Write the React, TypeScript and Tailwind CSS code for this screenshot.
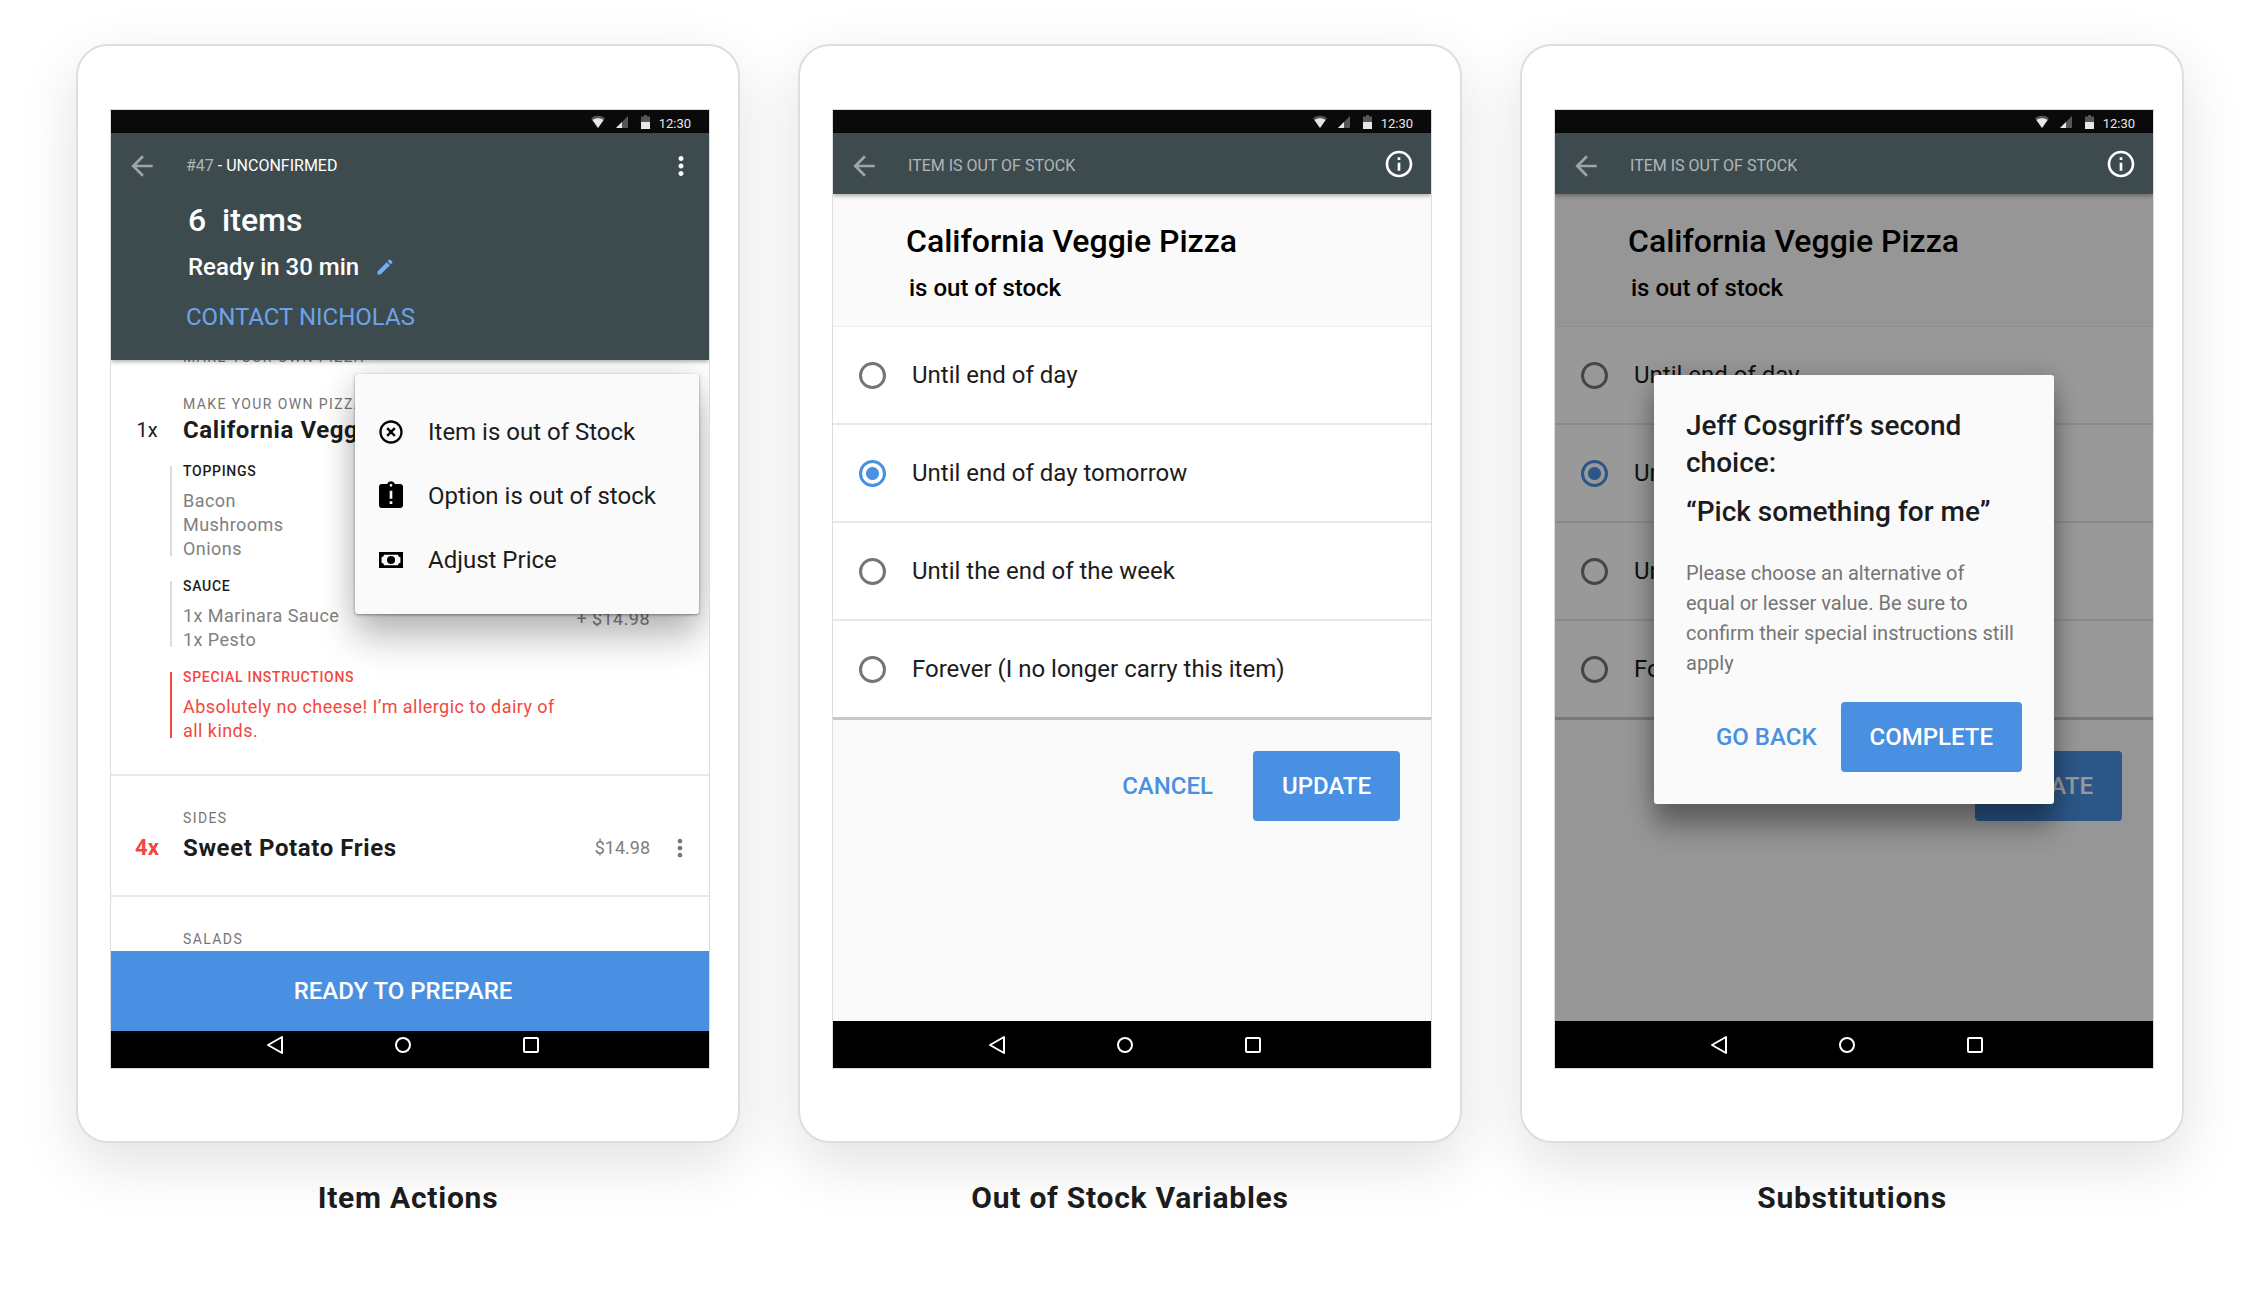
import type { ReactNode } from 'react';
import {
  MdArrowBack,
  MdAssignmentLate,
  MdEdit,
  MdHighlightOff,
  MdInfoOutline,
  MdMoreVert
} from 'react-icons/md';

interface OptionGroupProps {
  title: string;
  alert?: boolean;
  children: ReactNode;
}

interface OrderItemProps {
  quantity: string;
  category: string;
  name: string;
  price?: string;
  highlight?: boolean;
  children?: ReactNode;
}

const stockOptions = [
  'Until end of day',
  'Until end of day tomorrow',
  'Until the end of the week',
  'Forever (I no longer carry this item)'
];

function BanknoteIcon() {
  return (
    <svg viewBox="0 0 24 16" className="w-6 h-4" aria-hidden="true">
      <path
        fillRule="evenodd"
        d="M0 0h24v16H0zM5 2.7a2.6 2.6 0 0 1-2.4 2.6v5.4A2.6 2.6 0 0 1 5 13.3h14a2.6 2.6 0 0 1 2.4-2.6V5.3A2.6 2.6 0 0 1 19 2.7z"
      />
      <circle cx="12" cy="8" r="4" />
    </svg>
  );
}

function StatusBar() {
  return (
    <div className="h-[23px] shrink-0 bg-[#0a0a0a] flex items-center justify-end pr-[18px] text-[#e6e6e6]">
      <svg viewBox="0 0 14 13" className="w-[14px] h-[13px] mr-[11px]" fill="currentColor" aria-hidden="true">
        <path d="M7 13 0 3.2C2 1.500 4.400.7 7 .7s5 .8 7 2.500z" opacity=".35" />
        <path d="M7 13 1.400 5.100C3 3.900 5 3.300 7 3.300s4 .6 5.600 1.800z" />
      </svg>
      <svg viewBox="0 0 12 12" className="w-3 h-3 mr-[13px]" fill="currentColor" aria-hidden="true">
        <path d="M12 0v12H0z" opacity=".35" />
        <path d="M6 6v6H0z" />
      </svg>
      <svg viewBox="0 0 9 14" className="w-[9px] h-[14px] mr-[9px]" fill="currentColor" aria-hidden="true">
        <path d="M3 0h3v1.500h3V7H0V1.500h3z" opacity=".35" />
        <path d="M0 7h9v7H0z" />
      </svg>
      <span className="text-[13px] leading-4 pt-1">12:30</span>
    </div>
  );
}

function NavBar() {
  return (
    <nav className="h-[47px] shrink-0 bg-black flex items-center justify-center gap-[104px] pr-[14px]">
      <button type="button" aria-label="Back">
        <svg viewBox="0 0 24 24" className="size-6" fill="none" stroke="white" strokeWidth="2" strokeLinejoin="round">
          <path d="M19 4v16L5 12z" />
        </svg>
      </button>
      <button type="button" aria-label="Home">
        <svg viewBox="0 0 24 24" className="size-6" fill="none" stroke="white" strokeWidth="2">
          <circle cx="12" cy="12" r="7" />
        </svg>
      </button>
      <button type="button" aria-label="Recent apps">
        <svg viewBox="0 0 24 24" className="size-6" fill="none" stroke="white" strokeWidth="2">
          <rect x="5" y="5" width="14" height="14" rx="1" />
        </svg>
      </button>
    </nav>
  );
}

function AppBar({ title, action }: { title: ReactNode; action: ReactNode }) {
  return (
    <div className="h-[61px] pt-1 pl-[15px] pr-[13px] flex items-center">
      <button type="button" aria-label="Go back" className="mr-7 text-white/50">
        <MdArrowBack className="size-8" />
      </button>
      <span className="text-base leading-6 text-white/60">{title}</span>
      <div className="ml-auto flex">{action}</div>
    </div>
  );
}

function Device({ caption, children }: { caption: string; children: ReactNode }) {
  return (
    <figure>
      <div className="bg-white border-2 border-[#dedede] rounded-[32px] pt-[63px] pb-18 pl-8 pr-7 shadow-[0_20px_60px_rgba(0,0,0,0.12)]">
        <div className="relative aspect-[5/8] border border-[#dcdcdc] flex flex-col overflow-hidden">
          <StatusBar />
          {children}
          <NavBar />
        </div>
      </div>
      <figcaption className="mt-[35px] text-center text-[30px] leading-10 font-bold tracking-wide text-[#1c1c1c]">
        {caption}
      </figcaption>
    </figure>
  );
}

function OptionGroup({ title, alert, children }: OptionGroupProps) {
  return (
    <section className={`-ml-[13px] pl-[11px] border-l-2 ${alert ? 'border-[#f0483e]' : 'border-[#dcdcdc]'}`}>
      <h3
        className={`text-sm leading-[10px] font-medium tracking-wider ${alert ? 'text-[#f0483e]' : 'text-[#1c1c1c]'}`}
      >
        {title}
      </h3>
      <div className={`mt-[13px] -mb-[5px] text-lg leading-6 tracking-wide ${alert ? 'text-[#f0483e]' : 'text-[#808080]'}`}>
        {children}
      </div>
    </section>
  );
}

function OrderItem({ quantity, category, name, price, highlight, children }: OrderItemProps) {
  return (
    <article className="pt-8 border-b-2 border-[#e8e8e8]">
      <p className="pl-[72px] text-sm leading-5 tracking-widest text-[#757575]">{category}</p>
      <div className="flex items-center pr-[9px]">
        <span className={`w-[72px] text-center leading-8 ${highlight ? 'text-[22px] font-bold text-[#f0483e]' : 'text-xl text-[#1c1c1c]'}`}>
          {quantity}
        </span>
        <h2 className="text-2xl leading-8 font-bold tracking-wide text-[#1c1c1c]">{name}</h2>
        {price && (
          <>
            <span className="ml-auto mr-[10px] text-lg leading-6 text-[#808080]">{price}</span>
            <button type="button" aria-label={`${name} actions`} className="size-10 flex items-center justify-center text-[#757575]">
              <MdMoreVert className="size-7" />
            </button>
          </>
        )}
      </div>
      {children}
    </article>
  );
}

function ActionMenu() {
  const actions = [
    { label: 'Item is out of Stock', icon: <MdHighlightOff className="size-7" /> },
    { label: 'Option is out of stock', icon: <MdAssignmentLate className="size-8" /> },
    { label: 'Adjust Price', icon: <BanknoteIcon /> }
  ];

  return (
    <div
      role="menu"
      className="absolute top-[264px] right-[10px] w-[344px] h-[240px] pt-[26px] rounded-[3px] bg-[#fafafa] shadow-[0_24px_36px_rgba(0,0,0,0.25),0_0_30px_rgba(0,0,0,0.12),0_1px_3px_rgba(0,0,0,0.4)]"
    >
      {actions.map((action) => (
        <button
          key={action.label}
          type="button"
          role="menuitem"
          className="w-full h-16 pl-5 flex items-center gap-[21px] text-2xl text-[#1c1c1c]"
        >
          <span className="w-8 flex justify-center text-black">{action.icon}</span>
          {action.label}
        </button>
      ))}
    </div>
  );
}

function OrderScreen() {
  return (
    <>
      <header className="relative z-10 shrink-0 bg-[#3d4b4f] text-white shadow-[0_2px_4px_rgba(0,0,0,0.3)]">
        <AppBar
          title={<>#47 <span className="text-white">- UNCONFIRMED</span></>}
          action={
            <button type="button" aria-label="Order actions" className="text-white">
              <MdMoreVert className="size-[30px]" />
            </button>
          }
        />
        <div className="pt-[6px] pb-[27px] pl-[75px]">
          <div className="pl-0.5">
            <h1 className="text-[32px] leading-10 font-medium whitespace-pre">6  items</h1>
            <div className="mt-[11px] flex items-center gap-4">
              <p className="text-2xl leading-8 font-medium">Ready in 30 min</p>
              <button type="button" aria-label="Edit ready time" className="text-[#74aef6]">
                <MdEdit className="size-5" />
              </button>
            </div>
          </div>
          <div className="mt-[18px] text-2xl leading-8 text-[#6ba4ea]">
            <a href="#contact">CONTACT NICHOLAS</a>
          </div>
        </div>
      </header>

      <main className="flex-1 min-h-0 overflow-hidden bg-white">
        {/* sliver of the row scrolled under the header */}
        <div className="h-[2px] pl-[72px] flex items-end overflow-hidden text-sm leading-[10px] tracking-widest text-[#757575]">
          MAKE YOUR OWN PIZZA
        </div>
        <OrderItem quantity="1x" category="MAKE YOUR OWN PIZZA" name="California Veggie Pizza">
          <div className="mt-5 pb-9 pl-[72px] pr-[59px] flex flex-col gap-[25px]">
            <OptionGroup title="TOPPINGS">
              <ul>
                <li>Bacon</li>
                <li>Mushrooms</li>
                <li>Onions</li>
              </ul>
            </OptionGroup>
            <OptionGroup title="SAUCE">
              <ul>
                <li className="h-6 flex justify-between">
                  1x Marinara Sauce <span className="pt-[3px]">+ $14.98</span>
                </li>
                <li>1x Pesto</li>
              </ul>
            </OptionGroup>
            <OptionGroup title="SPECIAL INSTRUCTIONS" alert>
              <p className="max-w-[390px]">Absolutely no cheese! I’m allergic to dairy of all kinds.</p>
            </OptionGroup>
          </div>
        </OrderItem>
        <OrderItem quantity="4x" category="SIDES" name="Sweet Potato Fries" price="$14.98" highlight>
          <div className="h-[27px]" />
        </OrderItem>
        <p className="pt-8 pl-[72px] text-sm leading-5 tracking-widest text-[#757575]">SALADS</p>
      </main>

      <button type="button" className="relative -mb-[10px] h-20 shrink-0 pr-[14px] bg-[#4990e2] text-white text-2xl font-medium">
        READY TO PREPARE
      </button>
      <ActionMenu />
    </>
  );
}

function StockScreen({ name, dimmed }: { name: string; dimmed?: boolean }) {
  return (
    <>
      <header className="relative z-10 shrink-0 bg-[#3d4b4f] shadow-[0_2px_4px_rgba(0,0,0,0.3)]">
        <AppBar
          title="ITEM IS OUT OF STOCK"
          action={
            <button type="button" aria-label="Information" className="mb-1 mr-[3px] text-white">
              <MdInfoOutline className="size-8" />
            </button>
          }
        />
      </header>

      <main className="relative flex-1 min-h-0 bg-[#fafafa]">
        <div className="pt-[27px] pb-[22px] pl-[73px] border-b border-[#eeeeee] text-black">
          <h1 className="text-[32px] leading-10 font-medium">California Veggie Pizza</h1>
          <p className="mt-[11px] pl-[3px] text-2xl leading-8 font-medium">is out of stock</p>
        </div>
        <fieldset className="border-b-[3px] border-[#c8c8c8] bg-white">
          <legend className="sr-only">Out of stock duration</legend>
          {stockOptions.map((option, index) => (
            <label
              key={option}
              className="h-[98px] pl-[26px] flex items-center gap-[26px] border-b-2 border-[#e8e8e8] last:h-24 last:border-b-0 text-2xl text-[#1c1c1c]"
            >
              <input
                type="radio"
                name={name}
                defaultChecked={index === 1}
                className="appearance-none size-[27px] rounded-full border-[3px] border-[#757575] checked:border-[#4990e2] checked:bg-[radial-gradient(circle,#4990e2_6px,transparent_7px)]"
              />
              {option}
            </label>
          ))}
        </fieldset>
        <div className="pt-[31px] pr-[31px] flex items-center justify-end gap-10 text-2xl font-medium">
          <button type="button" className="text-[#4990e2]">CANCEL</button>
          <button type="button" className="h-[70px] px-[29px] rounded bg-[#4990e2] text-white">UPDATE</button>
        </div>
        {dimmed && <div className="absolute inset-0 bg-black/40" />}
      </main>
    </>
  );
}

function SecondChoiceDialog() {
  return (
    <div className="absolute inset-0 z-20 flex items-center justify-center">
      <div
        role="dialog"
        aria-labelledby="second-choice-title"
        className="w-[400px] py-8 px-8 rounded-[3px] bg-[#fafafa] shadow-[0_24px_24px_rgba(0,0,0,0.3),0_0_24px_rgba(0,0,0,0.22)]"
      >
        <h2 id="second-choice-title" className="text-[28px] leading-[37px] font-medium text-[#1c1c1c]">
          Jeff Cosgriff’s second choice:
        </h2>
        <p className="mt-3 text-[28px] leading-[37px] font-medium text-[#1c1c1c]">“Pick something for me”</p>
        <p className="mt-7 text-xl leading-[30px] text-[#757575]">
          Please choose an alternative of
          <br />
          equal or lesser value. Be sure to confirm their special instructions still apply
        </p>
        <div className="mt-6 flex items-center justify-end gap-6 text-2xl font-medium">
          <button type="button" className="text-[#4990e2]">GO BACK</button>
          <button type="button" className="h-[70px] px-[29px] rounded bg-[#4990e2] text-white">COMPLETE</button>
        </div>
      </div>
    </div>
  );
}

export default function App() {
  return (
    <div className="min-h-screen bg-white font-[Roboto,sans-serif] pt-11 pb-10 pl-[76px] pr-[66px]">
      <div className="grid grid-cols-3 gap-[58px]">
        <Device caption="Item Actions">
          <OrderScreen />
        </Device>
        <Device caption="Out of Stock Variables">
          <StockScreen name="stock-duration" />
        </Device>
        <Device caption="Substitutions">
          <StockScreen name="dimmed-stock-duration" dimmed />
          <SecondChoiceDialog />
        </Device>
      </div>
    </div>
  );
}
